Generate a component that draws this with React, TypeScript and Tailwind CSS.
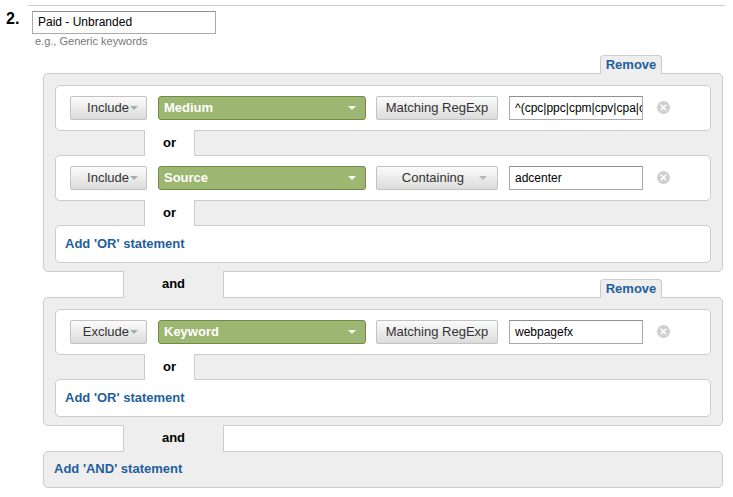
import React from "react";

function Caret({ color = "#a9a9a9" }: { color?: string }) {
  return (
    <svg width="8" height="4" viewBox="0 0 8 4" className="shrink-0">
      <path d="M0 0h8L4 4z" fill={color} />
    </svg>
  );
}

function ClearIcon() {
  return (
    <svg width="13" height="13" viewBox="0 0 13 13" className="ml-[14px] shrink-0">
      <circle cx="6.5" cy="6.5" r="6.5" fill="#cfcfcf" />
      <path d="M4.2 4.2l4.6 4.6M8.8 4.2l-4.6 4.6" stroke="#fff" strokeWidth="1.6" strokeLinecap="round" />
    </svg>
  );
}

function GrayButton({ className, children }: { className: string; children: React.ReactNode }) {
  return (
    <div
      className={
        "flex h-[24px] shrink-0 items-center rounded-[2px] border border-[#c3c3c3] bg-gradient-to-b from-[#fbfbfb] to-[#dcdcdc] text-[13px] text-[#333] " +
        className
      }
    >
      {children}
    </div>
  );
}

function TextField({ value }: { value: string }) {
  return (
    <input
      readOnly
      value={value}
      className="ml-[11px] h-[24px] w-[134px] shrink-0 border border-[#aaaaaa] border-t-[#8f8f8f] bg-white pl-[5px] text-[12px] text-black outline-none"
    />
  );
}

interface ConditionProps {
  mode: string;
  dimension: string;
  match: string;
  matchCaret?: boolean;
  value: string;
}

function Condition(props: ConditionProps) {
  return (
    <div className="flex h-[46px] items-center rounded-[5px] border border-[#cccccc] bg-white pl-[14px]">
      <GrayButton className="w-[77px] justify-end gap-[1px] pr-[8px]">
        <span>{props.mode}</span>
        <Caret />
      </GrayButton>
      <div className="ml-[11px] flex h-[24px] w-[208px] shrink-0 items-center justify-between rounded-[3px] border border-[#6e8b48] bg-[#9db672] pl-[5px] pr-[9px] text-[13px] font-bold text-white">
        <span>{props.dimension}</span>
        <Caret color="#ffffff" />
      </div>
      {props.matchCaret ? (
        <GrayButton className="ml-[10px] w-[122px] justify-end gap-[15px] pr-[10px]">
          <span>{props.match}</span>
          <Caret color="#b5b5b5" />
        </GrayButton>
      ) : (
        <GrayButton className="ml-[10px] w-[122px] justify-center">
          <span>{props.match}</span>
        </GrayButton>
      )}
      <TextField value={props.value} />
      <ClearIcon />
    </div>
  );
}

function OrJoin() {
  return (
    <div className="relative z-10 -my-px flex h-[26px]">
      <div className="ml-[89px] flex w-[51px] items-center justify-center border-x border-[#cccccc] bg-white text-[13px] font-bold text-black">
        or
      </div>
    </div>
  );
}

function AddOr() {
  return (
    <div className="flex h-[38px] items-center rounded-[5px] border border-[#cccccc] bg-white pl-[9px] text-[13px] font-bold text-[#1f5f9b]">
      Add 'OR' statement
    </div>
  );
}

function RemoveTab() {
  return (
    <div className="mr-[61px] ml-auto flex h-[19px] w-[62px] items-center justify-center self-end rounded-t-[4px] border-x border-t border-[#cccccc] bg-[#eeeeee] text-[13px] font-bold text-[#1f5f9b]">
      Remove
    </div>
  );
}

function AndJoin({ remove }: { remove?: boolean }) {
  return (
    <div className="relative z-10 -my-px flex h-[27px]">
      <div className="ml-[80px] flex w-[101px] items-center justify-center border-x border-[#cccccc] bg-[#eeeeee] text-[13px] font-bold text-black">
        and
      </div>
      {remove ? <RemoveTab /> : null}
    </div>
  );
}

function AndBlock({ children }: { children: React.ReactNode }) {
  return (
    <div className="rounded-[5px] border border-[#cccccc] bg-[#eeeeee] px-[11px] pt-[11px] pb-[8px]">
      {children}
    </div>
  );
}

export default function App() {
  return (
    <div className="h-[497px] w-[733px] overflow-hidden bg-white pt-[5px] font-['Liberation_Sans',Arial,sans-serif]">
      <div className="ml-[28px] w-[697px] border-t border-[#cccccc]" />

      <div className="mt-[3px] flex pl-[6px]">
        <div className="w-[26px] text-[16px] leading-[20px] font-bold text-black">2.</div>
        <div>
          <input
            readOnly
            value="Paid - Unbranded"
            className="h-[23px] w-[184px] border border-[#aaaaaa] border-t-[#8f8f8f] bg-white pl-[5px] text-[12px] text-black outline-none"
          />
          <div className="mt-[1px] ml-[3px] text-[11px] leading-[13px] text-[#777777]">e.g., Generic keywords</div>
        </div>
      </div>

      <div className="mt-[7px] ml-[43px] w-[680px]">
        <div className="relative z-10 -mb-px flex h-[19px]">
          <RemoveTab />
        </div>
        <AndBlock>
          <Condition mode="Include" dimension="Medium" match="Matching RegExp" value="^(cpc|ppc|cpm|cpv|cpa|cpp)$" />
          <OrJoin />
          <Condition mode="Include" dimension="Source" match="Containing" matchCaret value="adcenter" />
          <OrJoin />
          <AddOr />
        </AndBlock>
        <AndJoin remove />
        <AndBlock>
          <Condition mode="Exclude" dimension="Keyword" match="Matching RegExp" value="webpagefx" />
          <OrJoin />
          <AddOr />
        </AndBlock>
        <AndJoin />
        <div className="flex h-[37px] items-center rounded-[5px] border border-[#cccccc] bg-[#eeeeee] pl-[10px] text-[13px] font-bold text-[#1f5f9b]">
          Add 'AND' statement
        </div>
      </div>
    </div>
  );
}
